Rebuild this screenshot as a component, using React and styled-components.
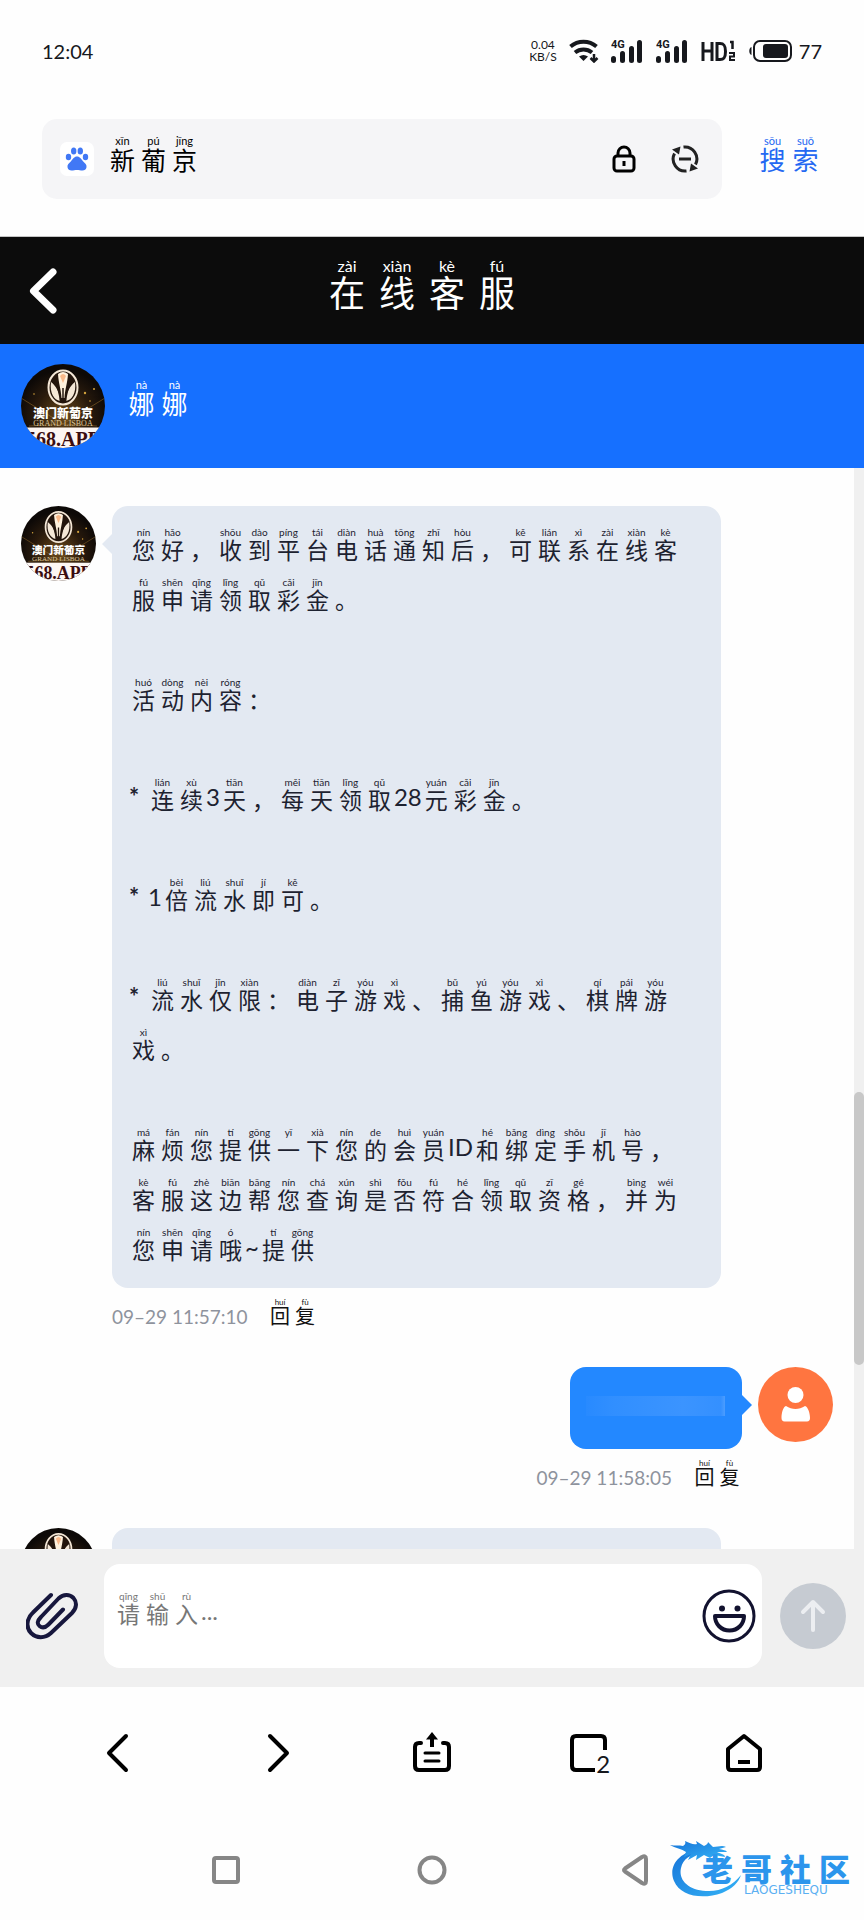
import React, { useState } from "react"
import styled, { createGlobalStyle, css } from "styled-components"

const latin = `Lato, "Open Sans", "Noto Sans CJK SC", sans-serif`
const hanzi = `"Noto Sans CJK SC", sans-serif`

const GlobalStyle = createGlobalStyle`
  * {
    box-sizing: border-box;
  }
  body {
    margin: 0;
    background: #fefefe;
    font-family: ${latin};
    color: #16181d;
  }
  button {
    border: 0;
    padding: 0;
    background: none;
    color: inherit;
    font: inherit;
    cursor: pointer;
  }
  p, h1, h2 {
    margin: 0;
    font-weight: 400;
  }
  svg {
    display: block;
    flex: none;
  }
`

/* ---------- pinyin text ---------- */

// cell = advance of one character, the rest are font sizes / line heights
const sizes = {
  small: { cell: 25, font: 20, line: 20, rt: 8, rtLine: 8, top: 0, bottom: 4 },
  body: { cell: 29, font: 23, line: 26, rt: 10, rtLine: 8, top: 6, bottom: 10 },
  field: { cell: 31, font: 25, line: 26, rt: 11, rtLine: 10, top: 0, bottom: 10 },
  name: { cell: 33, font: 26, line: 26, rt: 11, rtLine: 10, top: 0, bottom: 10 },
  title: { cell: 50, font: 36, line: 36, rt: 16, rtLine: 14, top: 0, bottom: 13 },
}

const Cell = styled.ruby`
  ${({ $size }) => {
    const s = sizes[$size]
    return css`
      display: inline-flex;
      flex-direction: column-reverse;
      justify-content: flex-start;
      align-items: center;
      vertical-align: top;
      width: ${s.cell}px;
      height: ${s.top + s.rtLine + s.line + s.bottom}px;
      padding-bottom: ${s.bottom}px;
      font-family: ${hanzi};
      font-size: ${s.font}px;
      line-height: ${s.line}px;

      rt {
        font-family: ${latin};
        font-size: ${s.rt}px;
        line-height: ${s.rtLine}px;
        white-space: nowrap;
        display: block;
      }
    `
  }}
`

const Latin = styled.span`
  display: inline-block;
  vertical-align: top;
  font-size: 24px;
  line-height: 50px;
`

const Star = styled(Latin)`
  width: 19px;
  font-weight: 700;
`

// "您/nín" is a character with its reading, anything else is plain
const Pinyin = ({ text, size }) =>
  text.split(" ").map((token, i) => {
    const [char, reading] = token.split("/")
    if (reading) {
      return (
        <Cell key={i} $size={size}>
          <span>{char}</span>
          <rt>{reading}</rt>
        </Cell>
      )
    }
    if (char === "*") return <Star key={i}>*</Star>
    if (/^[\x20-\x7e]+$/.test(char)) return <Latin key={i}>{char}</Latin>
    return (
      <Cell key={i} $size={size}>
        <span>{char}</span>
      </Cell>
    )
  })

/* ---------- status bar ---------- */

const Screen = styled.div`
  position: relative;
  display: flex;
  flex-direction: column;
  height: 100vh;
  overflow: hidden;
`

const StatusBar = styled.div`
  display: flex;
  align-items: center;
  justify-content: space-between;
  height: 101px;
  padding: 0 42px;
  font-size: 20px;
  flex: none;
`

const StatusIcons = styled.div`
  display: flex;
  align-items: center;
  gap: 12px;
`

const Speed = styled.div`
  font-size: 12px;
  line-height: 12px;
  text-align: center;
`

const Battery = styled.div`
  display: flex;
  align-items: center;
  gap: 7px;
`

const WifiIcon = () => (
  <svg width="30" height="24" viewBox="0 0 30 24" fill="none" stroke="#16181d" strokeWidth="4">
    <path d="M1.500 7.500C9 1 20 1 27.500 7.500" />
    <path d="M6 13.500C11 9.500 18 9.500 23 13.500" />
    <path d="M10 17.500C13 15.500 16 15.500 19 17.500L14.500 22Z" fill="#16181d" stroke="none" />
    <path d="M25 15v7M21.500 19l3.500 3.500L28.500 19" strokeWidth="2.500" />
  </svg>
)

const SignalIcon = () => (
  <svg width="33" height="24" viewBox="0 0 33 24" fill="#16181d">
    <text x="0" y="9" fontSize="11" fontWeight="700" fontFamily="Roboto, sans-serif">4G</text>
    <rect x="0" y="17" width="5" height="7" rx="2.500" />
    <rect x="9" y="12" width="5" height="12" rx="2.500" />
    <rect x="18" y="7" width="5" height="17" rx="2.500" />
    <rect x="26" y="1" width="5" height="23" rx="2.500" />
  </svg>
)

const HdIcon = () => (
  <svg width="36" height="24" viewBox="0 0 36 24" fill="none" stroke="#16181d">
    <path d="M2 3v19M11 3v19M2 12h9" strokeWidth="3" />
    <path d="M16 4.500h3c4 0 5.500 2 5.500 8s-1.500 8-5.500 8h-3z" strokeWidth="3" />
    <path d="M29 3h2.500v7" strokeWidth="2.500" />
    <path d="M28 14h5v3.500h-4V21h5" strokeWidth="2" />
  </svg>
)

const BatteryIcon = () => (
  <svg width="43" height="22" viewBox="0 0 43 22">
    <path d="M2.500 7v8C-.5 14-.5 8 2.500 7z" fill="#16181d" />
    <rect x="5" y="1" width="37" height="20" rx="6" fill="none" stroke="#16181d" strokeWidth="2" />
    <rect x="14" y="4" width="25" height="14" rx="3" fill="#16181d" />
  </svg>
)

/* ---------- browser search ---------- */

const SearchRow = styled.form`
  display: flex;
  align-items: center;
  gap: 34px;
  padding: 18px 42px 37px;
  border-bottom: 1px solid #c4c4c4;
  flex: none;
`

const SearchBox = styled.div`
  position: relative;
  display: flex;
  align-items: center;
  flex: 1;
  height: 80px;
  padding: 0 23px 0 18px;
  border-radius: 15px;
  background: #f5f5f7;
`

const PawTile = styled.span`
  display: flex;
  align-items: center;
  justify-content: center;
  width: 34px;
  height: 34px;
  border-radius: 7px;
  background: #fff;
`

const SearchLabel = styled.label`
  display: flex;
  flex: 1;
  margin-left: 13px;
  color: #000;
`

const SearchInput = styled.input`
  position: absolute;
  inset: 0;
  width: 100%;
  border: 0;
  padding: 0 120px 0 65px;
  background: transparent;
  outline: none;
  font: 25px ${hanzi};
`

const BoxButton = styled.button`
  position: relative;
  margin-left: 35px;
`

const SearchButton = styled.button`
  display: flex;
  color: #2468f2;
`

const PawIcon = () => (
  <svg width="24" height="24" viewBox="0 0 24 24" fill="#4178f5">
    <ellipse cx="3.500" cy="10" rx="2.700" ry="3.300" />
    <ellipse cx="8.700" cy="4" rx="2.700" ry="3.500" />
    <ellipse cx="15.300" cy="4" rx="2.700" ry="3.500" />
    <ellipse cx="20.500" cy="10" rx="2.700" ry="3.300" />
    <path d="M12 9.500c3 0 4 2.500 6 4.700 2 2 4 3.300 3.500 6-.4 2.300-2 3.300-4 3.300-2 0-3.500-.5-5.500-.5s-3.500.5-5.500.5c-2 0-3.600-1-4-3.300-.5-2.700 1.500-4 3.500-6 2-2.200 3-4.700 6-4.700z" />
  </svg>
)

const LockIcon = () => (
  <svg width="24" height="28" viewBox="0 0 24 28" fill="none" stroke="#000" strokeWidth="3">
    <rect x="2" y="11" width="20" height="15" rx="3" />
    <path d="M6 11V8a6 6 0 0 1 12 0v3M12 16v5" />
  </svg>
)

const RefreshIcon = () => (
  <svg width="28" height="28" viewBox="0 0 28 28" fill="none" stroke="#222" strokeWidth="3">
    <path d="M12.500 2.100A12 12 0 0 1 24.500 19.500M15.500 25.900A12 12 0 0 1 3.500 8.500" />
    <path d="M8 14h12" />
    <path d="M1 4.500L9.500 1.500 8 9.500zM27 23.500l-8.500 3L20 18.500z" fill="#222" stroke="none" />
  </svg>
)

/* ---------- chat header ---------- */

const TitleBar = styled.header`
  display: grid;
  grid-template-columns: 28px 1fr 28px;
  align-items: center;
  height: 107px;
  padding: 0 49px 0 29px;
  background: #0c0c0c;
  color: #fff;
  flex: none;
`

const Title = styled.h1`
  display: flex;
  justify-content: center;
`

const AgentBar = styled.div`
  display: flex;
  align-items: center;
  gap: 20px;
  padding: 20px 21px;
  background: #1670ff;
  color: #fff;
  flex: none;
`

const AgentName = styled.h2`
  display: flex;
  padding-bottom: 6px;
`

const BackIcon = () => (
  <svg width="28" height="46" viewBox="0 0 28 46" fill="none" stroke="#fff" strokeWidth="7" strokeLinecap="round" strokeLinejoin="round">
    <path d="M24 4L4.500 23 24 42" />
  </svg>
)

const AgentAvatar = ({ size, id }) => (
  <svg width={size} height={size} viewBox="0 0 84 84" role="img" aria-label="澳门新葡京">
    <defs>
      <clipPath id={`${id}-clip`}>
        <circle cx="42" cy="42" r="42" />
      </clipPath>
      <radialGradient id={`${id}-glow`} cx="50%" cy="62%" r="55%">
        <stop offset="0" stopColor="#6b4a1c" />
        <stop offset="0.600" stopColor="#2a1b0d" />
        <stop offset="1" stopColor="#0d0907" />
      </radialGradient>
    </defs>
    <g clipPath={`url(#${id}-clip)`}>
      <rect width="84" height="84" fill={`url(#${id}-glow)`} />
      <path d="M42 60L0 34M42 60L84 34M42 60L8 62M42 60L76 62" stroke="#a5792f" strokeWidth="0.700" opacity="0.700" />
      <g fill="#d3a23d">
        <circle cx="64" cy="29" r="1.200" />
        <circle cx="73" cy="25" r="1" />
        <circle cx="69" cy="37" r="0.800" />
        <circle cx="13" cy="30" r="0.800" />
      </g>
      <ellipse cx="42" cy="23.500" rx="14.500" ry="17" fill="#23150c" stroke="#f4e7d6" strokeWidth="2" />
      <path d="M40.500 34C40 25 37.500 19 37 10q5-4 10 0C46.500 19 44 25 43.500 34z" fill="#fff1dc" />
      <path d="M39 37c-6-1-10.500-8-9-19 5 4 9 10 9 19zM45 37c6-1 10.500-8 9-19-5 4-9 10-9 19z" fill="#f4e7d6" />
      <path d="M39 12q3-4 6 0l-3 7z" fill="#f9b98a" />
      <path d="M39.500 38C39 28 36 22 33.500 17M44.500 38C45 28 48 22 50.500 17M42 24v14" fill="none" stroke="#23150c" strokeWidth="1.500" />
      <text x="42" y="54" fontSize="12" fontWeight="900" textAnchor="middle" fill="#fff" fontFamily="Noto Sans CJK SC">澳门新葡京</text>
      <text x="42" y="62" fontSize="8" textAnchor="middle" fill="#d8c49c" fontFamily="Liberation Serif">GRAND LISBOA</text>
      <rect y="63.500" width="84" height="21" fill="#fdf6f3" />
      <text x="42" y="82" fontSize="20" fontWeight="700" textAnchor="middle" fill="#3b0d10" fontFamily="Liberation Serif">568.APP</text>
    </g>
  </svg>
)

/* ---------- messages ---------- */

const Chat = styled.main`
  display: flex;
  flex: 1;
  min-height: 0;
`

const MessageList = styled.div`
  flex: 1;
  min-width: 0;
  padding: 38px 21px 0;
  overflow: hidden;
`

const ScrollTrack = styled.div`
  display: grid;
  grid-template-rows: 624fr 273fr 184fr;
  width: 10px;
  background: #f0f0f0;
`

const ScrollThumb = styled.div`
  grid-row: 2;
  border-radius: 5px;
  background: #c8c8c8;
`

const MessageRow = styled.div`
  display: flex;
  flex-direction: ${({ $mine }) => ($mine ? "row-reverse" : "row")};
  align-items: flex-start;
  gap: 16px;
`

const MessageBody = styled.div`
  display: flex;
  flex-direction: column;
  align-items: ${({ $mine }) => ($mine ? "flex-end" : "stretch")};
  flex: 1;
  margin-right: ${({ $mine }) => ($mine ? 0 : 112)}px;
`

const Bubble = styled.div`
  position: relative;
  display: flex;
  flex-direction: column;
  gap: 50px;
  min-height: 82px;
  padding: 16px 24px 16px 17px;
  border-radius: 16px;
  background: ${({ $mine }) => ($mine ? "#2388ff" : "#e3e9f2")};
  color: #1d2230;

  &::after {
    content: "";
    position: absolute;
    top: 28px;
    border: 10px solid transparent;
    ${({ $mine }) =>
      $mine
        ? "left: 100%; border-left-color: #2388ff; border-right: 0;"
        : "right: 100%; border-right-color: #e3e9f2; border-left: 0;"}
  }
`

const Smudge = styled.div`
  width: 139px;
  height: 20px;
  margin: 13px 0 0;
  background: linear-gradient(90deg, #288aff, #318fff 20%, #3b94ff 70%, #3490ff 97%, #4c9dff);
`

const MyBubble = styled(Bubble)`
  padding: 16px;
  width: 172px;
`

const Meta = styled.div`
  display: flex;
  align-items: flex-start;
  gap: 20px;
  height: 79px;
  padding-top: 10px;
`

const Time = styled.time`
  font-size: 19px;
  line-height: 38px;
  color: #8e939d;
`

const Reply = styled.button`
  display: flex;
  color: #111;
`

const UserAvatar = () => (
  <svg width="75" height="75" viewBox="0 0 75 75">
    <circle cx="37.500" cy="37.500" r="37.500" fill="#ff7540" />
    <circle cx="37.500" cy="28" r="8" fill="#fff" />
    <path d="M28 39c6 4 13 4 19 0 3 1 5 7 5 12 0 2-1 3.500-3 3.500H26.500c-2 0-3-1.500-3-3.500 0-5 1.500-11 4.500-12z" fill="#fff" />
  </svg>
)

/* ---------- composer ---------- */

const Composer = styled.form`
  display: flex;
  align-items: center;
  height: 138px;
  padding: 15px 18px 19px 26px;
  background: #f0f0f0;
  flex: none;
`

const InputBox = styled.div`
  position: relative;
  display: flex;
  align-items: center;
  justify-content: flex-end;
  flex: 1;
  height: 104px;
  margin: 0 18px 0 26px;
  padding-right: 6px;
  border-radius: 16px;
  background: #fff;
`

const Placeholder = styled.label`
  position: absolute;
  top: 22px;
  left: 10px;
  color: #777;
  pointer-events: none;
`

const MessageInput = styled.textarea`
  flex: 1;
  height: 104px;
  border: 0;
  padding: 35px 10px;
  background: transparent;
  outline: none;
  resize: none;
  font: 23px ${hanzi};
`

const SendButton = styled.button`
  display: flex;
  align-items: center;
  justify-content: center;
  width: 66px;
  height: 66px;
  border-radius: 50%;
  background: #c6cbd2;
`

const ClipIcon = () => (
  <svg width="52" height="48" viewBox="0 0 52 48" fill="none" stroke="#17173d" strokeWidth="4" strokeLinecap="round" strokeLinejoin="round">
    <path d="M25 3L7 20.500C0 27 0 36 5 41c5.500 5.500 14 5.500 20 0l21-20c5-5 5-11 1.500-15-4-4-10-4-15 .5L15 25c-4 4-4 7-1.500 9s5.500 2 9-1.500L37 17.500" />
  </svg>
)

const SmileIcon = () => (
  <svg width="54" height="54" viewBox="0 0 54 54" fill="none" stroke="#12122f" strokeWidth="3">
    <circle cx="27" cy="27" r="25" />
    <path d="M13 27h29c0 8-6 14.500-14.500 14.500S13 35 13 27z" strokeWidth="4" strokeLinejoin="round" />
    <circle cx="20" cy="19.500" r="3" fill="#12122f" stroke="none" />
    <circle cx="35.500" cy="19.500" r="3" fill="#12122f" stroke="none" />
  </svg>
)

const ArrowUpIcon = () => (
  <svg width="26" height="34" viewBox="0 0 26 34" fill="none" stroke="#eceef1" strokeWidth="4" strokeLinecap="round" strokeLinejoin="round">
    <path d="M13 31V3M3 13L13 3l10 10" />
  </svg>
)

/* ---------- browser toolbar and system keys ---------- */

const Toolbar = styled.nav`
  display: grid;
  grid-template-columns: repeat(5, 1fr);
  align-items: center;
  justify-items: center;
  height: 132px;
  padding: 0 39px;
  flex: none;
`

const SystemKeys = styled.nav`
  display: grid;
  grid-template-columns: repeat(3, 1fr);
  align-items: center;
  justify-items: center;
  height: 101px;
  padding: 0 123px;
  flex: none;
`

const TabsButton = styled.button`
  position: relative;
`

const TabCount = styled.span`
  position: absolute;
  right: 0;
  bottom: 0;
  font-size: 24px;
  line-height: 20px;
`

const Icon = ({ children, size = 42, color = "#000", width = 4 }) => (
  <svg width={size} height={size} viewBox={`0 0 ${size} ${size}`} fill="none" stroke={color} strokeWidth={width} strokeLinejoin="round" strokeLinecap="round">
    {children}
  </svg>
)

const Watermark = styled.div`
  position: absolute;
  right: 14px;
  bottom: 20px;
  width: 180px;
  height: 60px;
  padding: 12px 0 0 32px;
`

const Swoosh = styled.svg`
  position: absolute;
  top: 0;
  left: 0;
`

const WatermarkName = styled.div`
  position: relative;
  display: flex;
  justify-content: space-between;
  font: 900 31px/32px ${hanzi};
  color: #2b95ec;
`

const WatermarkSub = styled.div`
  position: relative;
  padding-left: 42px;
  font: 12px/12px "DejaVu Sans", sans-serif;
  color: #5bb0f2;
`

const paragraphs = [
  "您/nín 好/hǎo ， 收/shōu 到/dào 平/píng 台/tái 电/diàn 话/huà 通/tōng 知/zhī 后/hòu ， 可/kě 联/lián 系/xì 在/zài 线/xiàn 客/kè 服/fú 申/shēn 请/qǐng 领/lǐng 取/qǔ 彩/cǎi 金/jīn 。",
  "活/huó 动/dòng 内/nèi 容/róng ：",
  "* 连/lián 续/xù 3 天/tiān ， 每/měi 天/tiān 领/lǐng 取/qǔ 28 元/yuán 彩/cǎi 金/jīn 。",
  "* 1 倍/bèi 流/liú 水/shuǐ 即/jí 可/kě 。",
  "* 流/liú 水/shuǐ 仅/jǐn 限/xiàn ： 电/diàn 子/zǐ 游/yóu 戏/xì 、 捕/bǔ 鱼/yú 游/yóu 戏/xì 、 棋/qí 牌/pái 游/yóu 戏/xì 。",
  "麻/má 烦/fán 您/nín 提/tí 供/gōng 一/yī 下/xià 您/nín 的/de 会/huì 员/yuán ID 和/hé 绑/bǎng 定/dìng 手/shǒu 机/jī 号/hào ， 客/kè 服/fú 这/zhè 边/biān 帮/bāng 您/nín 查/chá 询/xún 是/shì 否/fǒu 符/fú 合/hé 领/lǐng 取/qǔ 资/zī 格/gé ， 并/bìng 为/wéi 您/nín 申/shēn 请/qǐng 哦/ó ~ 提/tí 供/gōng",
]

const MessageMeta = ({ time }) => (
  <Meta>
    <Time>{time}</Time>
    <Reply type="button">
      <Pinyin text="回/huí 复/fù" size="small" />
    </Reply>
  </Meta>
)

const App = () => {
  const [query, setQuery] = useState("")
  const [draft, setDraft] = useState("")

  return (
    <Screen>
      <GlobalStyle />

      <StatusBar>
        <span>12:04</span>
        <StatusIcons>
          <Speed>
            <div>0.04</div>
            <div>KB/S</div>
          </Speed>
          <WifiIcon />
          <SignalIcon />
          <SignalIcon />
          <HdIcon />
          <Battery>
            <BatteryIcon />
            <span>77</span>
          </Battery>
        </StatusIcons>
      </StatusBar>

      <SearchRow onSubmit={(e) => e.preventDefault()}>
        <SearchBox>
          <PawTile>
            <PawIcon />
          </PawTile>
          <SearchLabel htmlFor="query">
            {!query && <Pinyin text="新/xīn 葡/pú 京/jīng" size="field" />}
          </SearchLabel>
          <SearchInput id="query" type="text" value={query} onChange={(e) => setQuery(e.target.value)} />
          <BoxButton type="button" aria-label="安全">
            <LockIcon />
          </BoxButton>
          <BoxButton type="button" aria-label="刷新">
            <RefreshIcon />
          </BoxButton>
        </SearchBox>
        <SearchButton type="submit">
          <Pinyin text="搜/sōu 索/suǒ" size="name" />
        </SearchButton>
      </SearchRow>

      <TitleBar>
        <button type="button" aria-label="返回">
          <BackIcon />
        </button>
        <Title>
          <Pinyin text="在/zài 线/xiàn 客/kè 服/fú" size="title" />
        </Title>
      </TitleBar>

      <AgentBar>
        <AgentAvatar size={84} id="head" />
        <AgentName>
          <Pinyin text="娜/nà 娜/nà" size="name" />
        </AgentName>
      </AgentBar>

      <Chat>
        <MessageList>
          <MessageRow>
            <AgentAvatar size={75} id="first" />
            <MessageBody>
              <Bubble>
                {paragraphs.map((text, i) => (
                  <p key={i}>
                    <Pinyin text={text} size="body" />
                  </p>
                ))}
              </Bubble>
              <MessageMeta time="09–29 11:57:10" />
            </MessageBody>
          </MessageRow>

          <MessageRow $mine>
            <UserAvatar />
            <MessageBody $mine>
              <MyBubble $mine>
                <Smudge />
              </MyBubble>
              <MessageMeta time="09–29 11:58:05" />
            </MessageBody>
          </MessageRow>

          <MessageRow>
            <AgentAvatar size={75} id="next" />
            <MessageBody>
              <Bubble />
            </MessageBody>
          </MessageRow>
        </MessageList>
        <ScrollTrack>
          <ScrollThumb />
        </ScrollTrack>
      </Chat>

      <Composer onSubmit={(e) => e.preventDefault()}>
        <button type="button" aria-label="附件">
          <ClipIcon />
        </button>
        <InputBox>
          <MessageInput id="draft" value={draft} onChange={(e) => setDraft(e.target.value)} />
          <Placeholder htmlFor="draft">
            {!draft && <Pinyin text="请/qǐng 输/shū 入/rù ..." size="body" />}
          </Placeholder>
          <button type="button" aria-label="表情">
            <SmileIcon />
          </button>
        </InputBox>
        <SendButton type="submit" aria-label="发送">
          <ArrowUpIcon />
        </SendButton>
      </Composer>

      <Toolbar>
        <button type="button" aria-label="后退">
          <Icon>
            <path d="M29 4L12 21l17 17" />
          </Icon>
        </button>
        <button type="button" aria-label="前进">
          <Icon>
            <path d="M16 4l17 17-17 17" />
          </Icon>
        </button>
        <button type="button" aria-label="分享">
          <Icon>
            <path d="M10 11H8q-4 0-4 4v19q0 4 4 4h26q4 0 4-4V15q0-4-4-4h-2" />
            <path d="M14 21h14M14 29h14" strokeWidth="3" />
            <path d="M21 15V6" strokeLinecap="butt" />
            <path d="M21 0l6 7.500H15z" fill="#000" stroke="none" />
          </Icon>
        </button>
        <TabsButton type="button" aria-label="窗口 2">
          <Icon>
            <path d="M27 38H8q-4 0-4-4V8q0-4 4-4h25q4 0 4 4v10" strokeLinecap="butt" />
          </Icon>
          <TabCount>2</TabCount>
        </TabsButton>
        <button type="button" aria-label="主页">
          <Icon>
            <path d="M3 17L19 4l16 13v18q0 3-3 3H6q-3 0-3-3z" />
            <path d="M13 30h12" strokeLinecap="butt" />
          </Icon>
        </button>
      </Toolbar>

      <SystemKeys>
        <button type="button" aria-label="最近">
          <Icon size={32} color="#868686">
            <rect x="4" y="4" width="24" height="24" rx="2" />
          </Icon>
        </button>
        <button type="button" aria-label="桌面">
          <Icon size={32} color="#868686">
            <circle cx="16" cy="16" r="12.500" />
          </Icon>
        </button>
        <button type="button" aria-label="返回键">
          <Icon size={32} color="#868686">
            <path d="M3 14.500L20 3q4-2 4 2v22q0 4-4 2L3 17.500q-2-1.500 0-3z" />
          </Icon>
        </button>
      </SystemKeys>

      <Watermark>
        <Swoosh width="76" height="60" viewBox="0 0 76 60">
          <defs>
            <linearGradient id="swoosh" x1="0" y1="0" x2="1" y2="1">
              <stop offset="0" stopColor="#1673d8" />
              <stop offset="1" stopColor="#35b4f7" />
            </linearGradient>
          </defs>
          <g fill="url(#swoosh)">
            <path d="M30 9C8 12-2 27 4 41c6 15 28 19 48 12 10-4 17-11 19-18-8 10-19 16-32 16C20 51 8 41 11 28 13 19 20 14 33 13z" />
            <path d="M0 5c5 1 9 0 13 1 2-1 3-3 2-5 5 2 8 4 12 3l-1-3 8 5c3-1 4-3 4-4l5 5c5 0 9-2 13 0l-7 2c4 1 7 1 8 3l-10 0c4 2 8 2 8 5l-11-2-4 3-6-3-8 5 1-5-9 5 3-6-7 3 2-5C12 9 5 8 0 5z" />
          </g>
        </Swoosh>
        <WatermarkName>
          <span>老</span>
          <span>哥</span>
          <span>社</span>
          <span>区</span>
        </WatermarkName>
        <WatermarkSub>LAOGESHEQU</WatermarkSub>
      </Watermark>
    </Screen>
  )
}

export default App
